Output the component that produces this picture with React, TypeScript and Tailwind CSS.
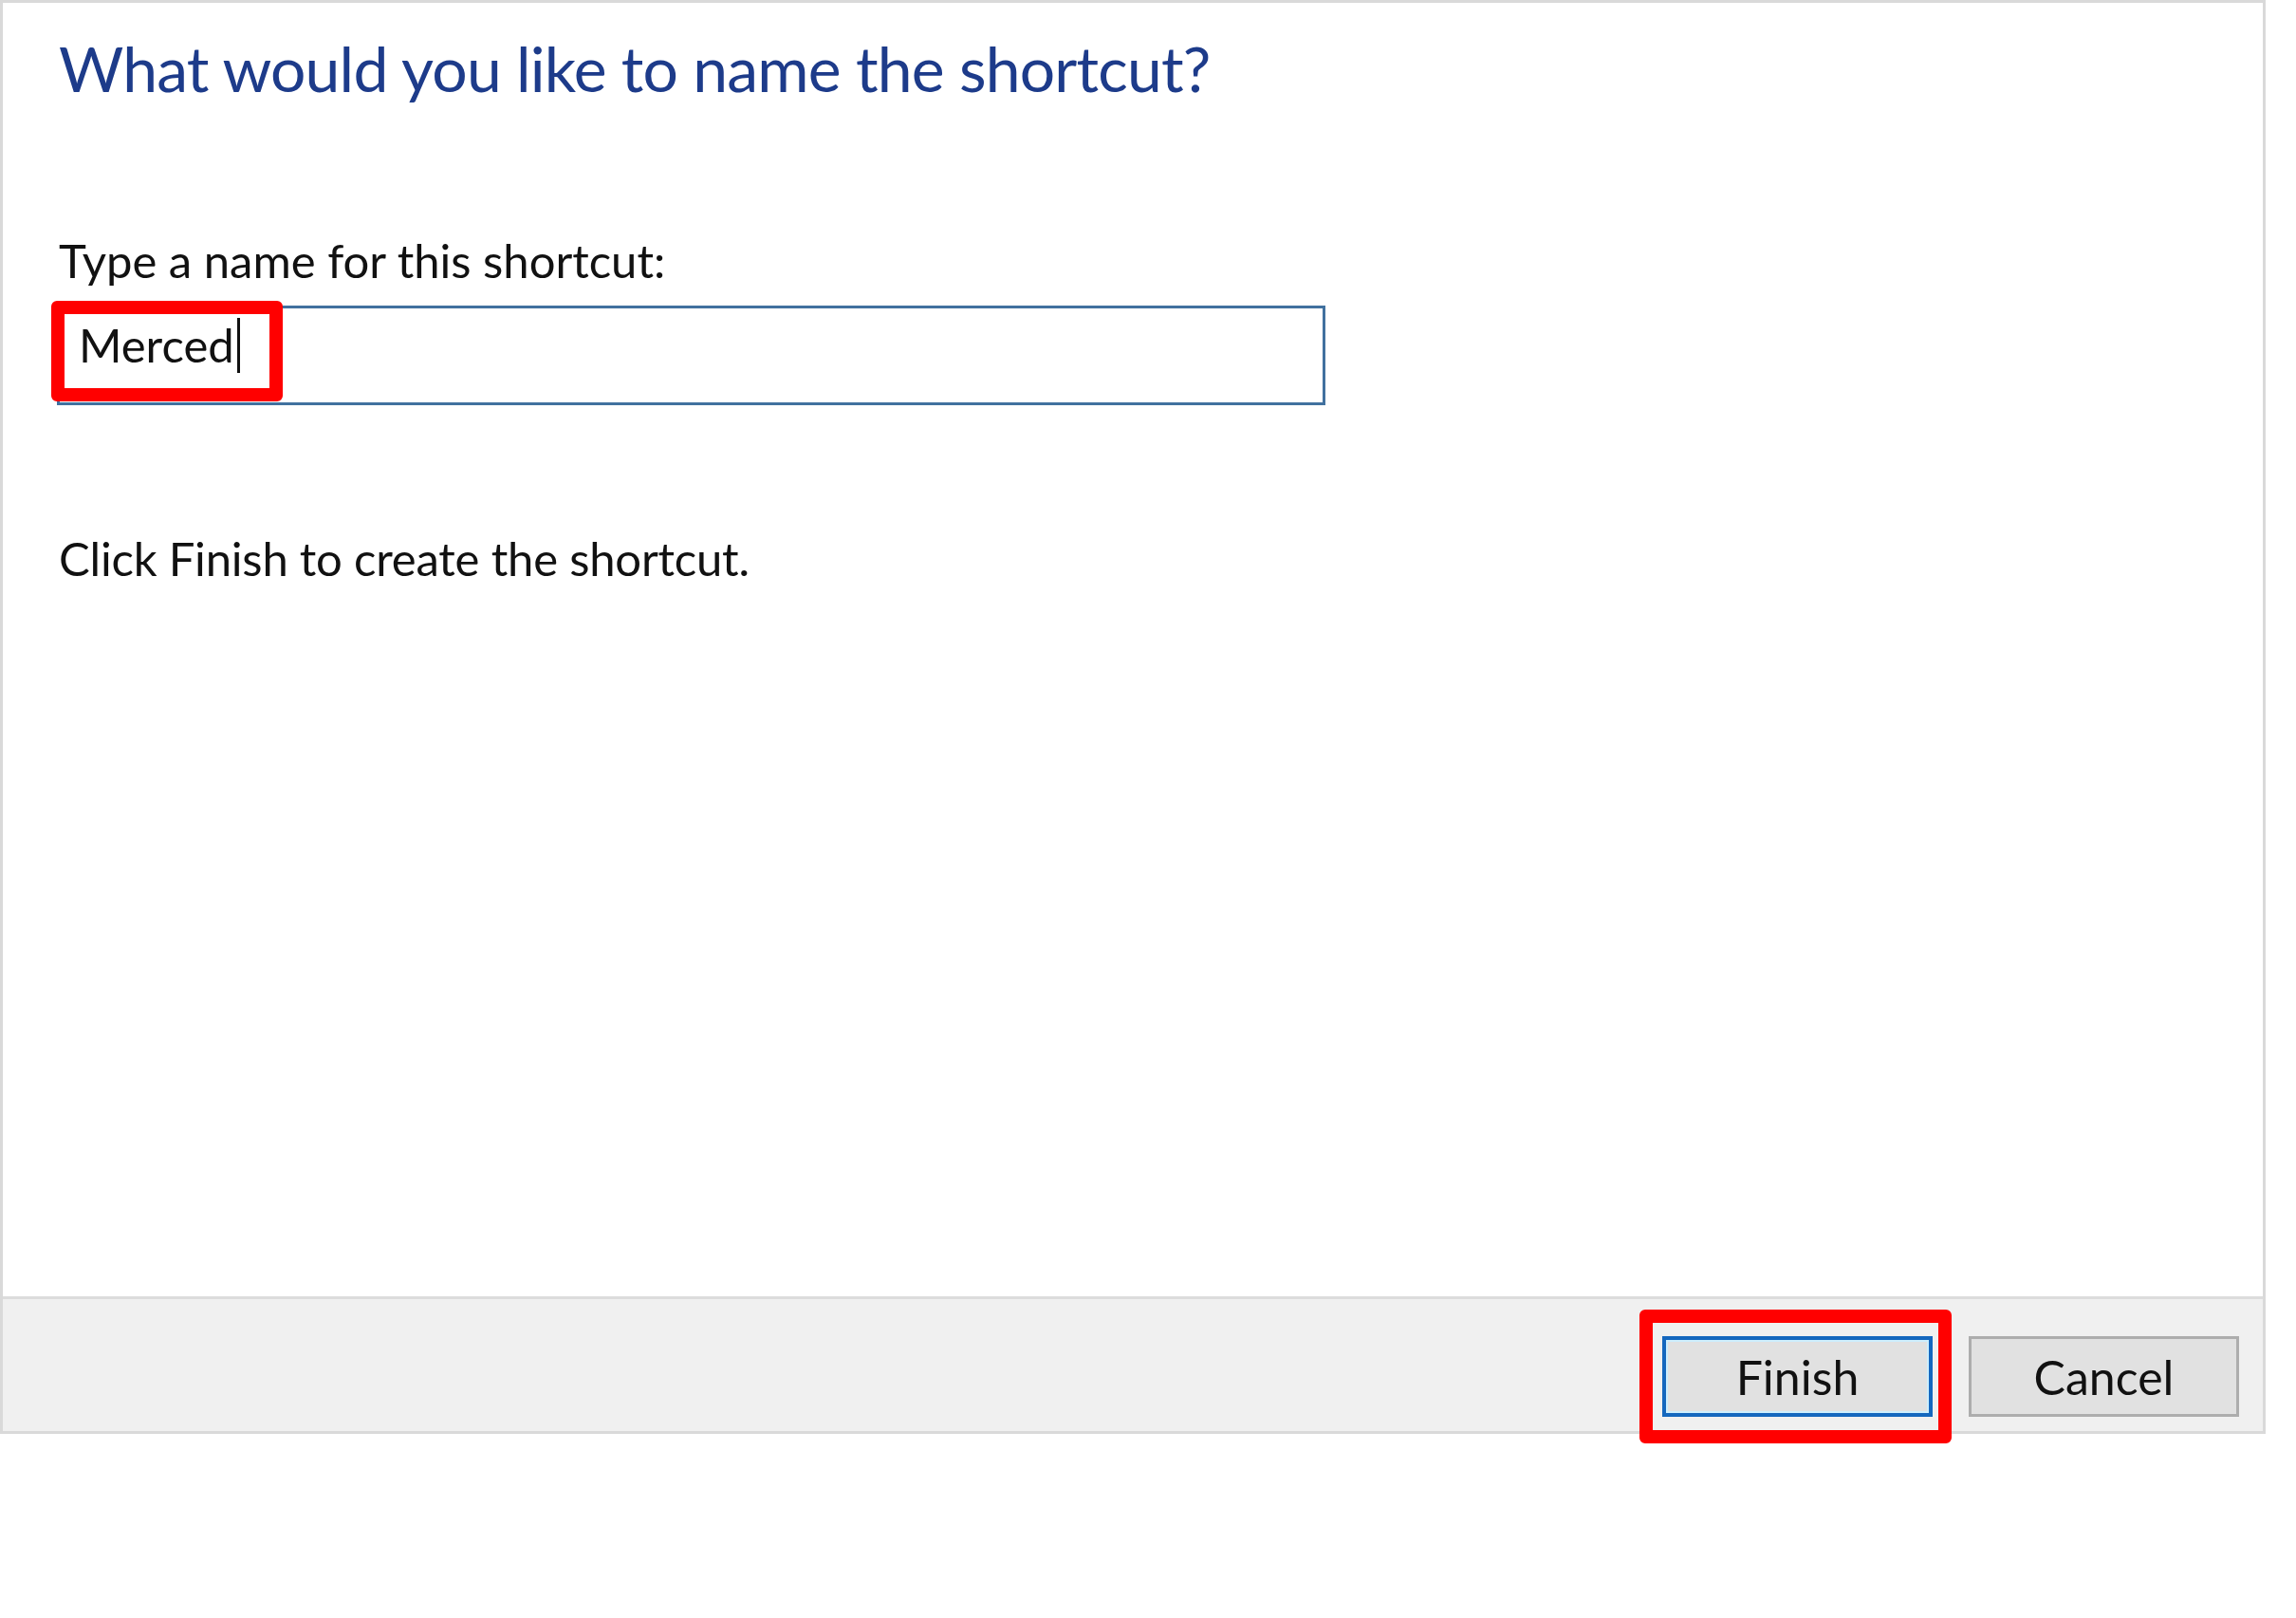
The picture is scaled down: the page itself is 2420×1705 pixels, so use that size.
export default function App() {
  return (
    <div className="relative min-h-screen w-full bg-white font-[Lato,sans-serif]">
      <div className="flex h-[1511px] w-[2388px] flex-col border-[3px] border-[#d9d9d9]">
        {/* wizard page */}
        <div className="flex h-[1363px] flex-col items-start bg-white pl-[59px] pt-[36px]">
          <h1 className="text-[66px] font-normal leading-none tracking-[-0.8px] text-[#1d3b8a]">
            What would you like to name the shortcut?
          </h1>
          <label className="mt-[145px] text-[49px] leading-none text-[#111]">
            Type a name for this shortcut:
          </label>
          <div className="-ml-[2px] mt-[23px] flex h-[105px] w-[1337px] items-start border-[3px] border-[#41719f] bg-white pl-[20px] pt-[14px]">
            <span className="text-[49px] leading-none text-[#111]">Merced</span>
            <span className="-mt-[4px] ml-[3px] h-[58px] w-[3px] bg-[#111]" />
          </div>
          <p className="mt-[137px] text-[49px] leading-none tracking-[-0.2px] text-[#111]">
            Click Finish to create the shortcut.
          </p>
        </div>

        {/* button bar */}
        <div className="flex flex-1 items-start justify-end gap-[38px] border-t-[3px] border-[#dcdcdc] bg-[#f0f0f0] pr-[25px] pt-[39px]">
          <button className="flex h-[85px] w-[285px] items-center justify-center border-[4px] border-[#1467be] bg-[#e1e1e1] text-[50px] leading-none text-[#111] shadow-[inset_0_0_0_2px_#cdeefd]">
            Finish
          </button>
          <button className="flex h-[85px] w-[285px] items-center justify-center border-[3px] border-[#adadad] bg-[#e1e1e1] text-[50px] leading-none text-[#111]">
            Cancel
          </button>
        </div>
      </div>

      {/* red callouts */}
      <div className="pointer-events-none absolute left-[54px] top-[317px] h-[106px] w-[244px] rounded-[6px] border-[14px] border-[#ff0000]" />
      <div className="pointer-events-none absolute left-[1728px] top-[1380px] h-[141px] w-[329px] rounded-[6px] border-[14px] border-[#ff0000]" />
    </div>
  );
}
